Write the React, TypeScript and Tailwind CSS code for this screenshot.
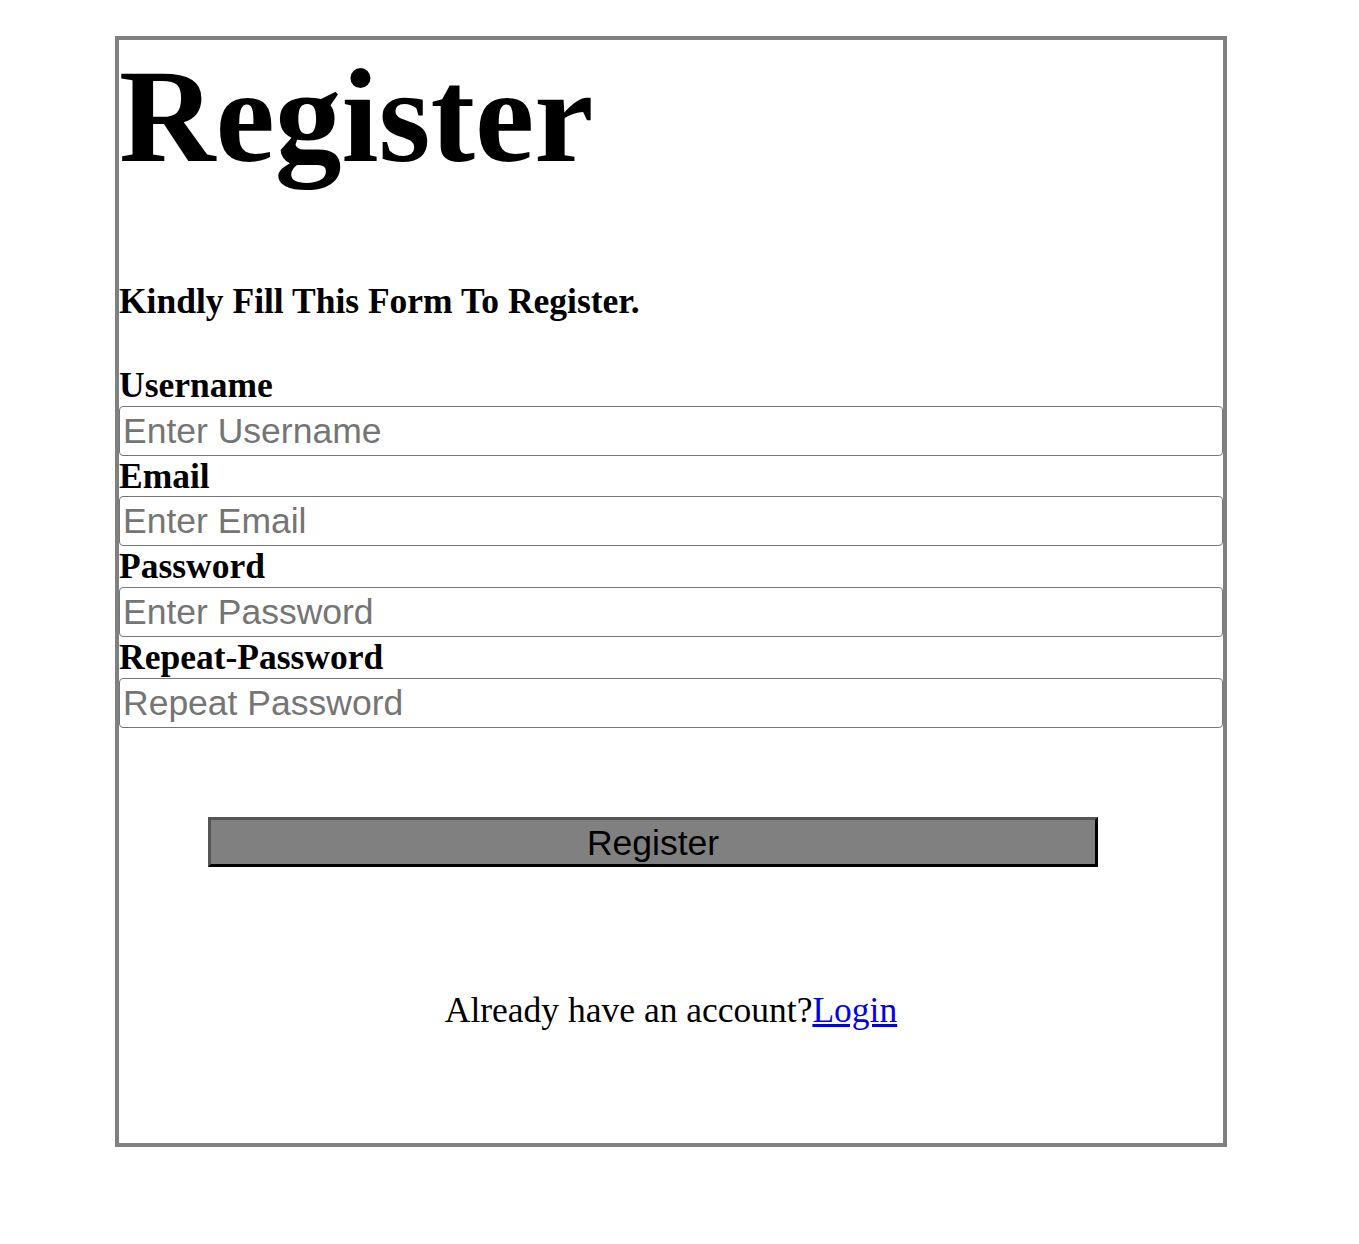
const fields = [
  { label: 'Username', placeholder: 'Enter Username', type: 'text' },
  { label: 'Email', placeholder: 'Enter Email', type: 'email' },
  { label: 'Password', placeholder: 'Enter Password', type: 'password' },
  { label: 'Repeat-Password', placeholder: 'Repeat Password', type: 'password' },
];

export default function App() {
  return (
    <div className="min-h-[1244px] bg-white pt-[36px]">
      <div className="ml-[115px] w-[1112px] h-[1111px] border-4 border-[#808080] font-['Liberation_Serif',serif] text-black">
        <h1 className="text-[133.5px] font-bold leading-[153px]">Register</h1>

        <h3 className="mt-[88px] text-[35.5px] font-bold leading-[41px]">
          Kindly Fill This Form To Register.
        </h3>

        <form className="mt-[43px]" onSubmit={(e) => e.preventDefault()}>
          {fields.map((f) => (
            <div key={f.label}>
              <label className="block text-[35.5px] font-bold leading-[40.67px]">{f.label}</label>
              <input
                type={f.type}
                placeholder={f.placeholder}
                className="block w-full h-[50px] rounded-[4px] border border-[#767676] px-[3px] pt-[1px] font-['Liberation_Sans',sans-serif] text-[35.5px] placeholder:text-[#757575] outline-none"
              />
            </div>
          ))}

          <button
            type="submit"
            className="mt-[89px] ml-[89px] flex items-center justify-center w-[890px] h-[50px] pt-[2px] border-[3px] border-t-[#555555] border-l-[#555555] border-b-black border-r-black bg-[#808080] font-['Liberation_Sans',sans-serif] text-[35.5px] leading-[40px] text-black"
          >
            Register
          </button>
        </form>

        <p className="mt-[123px] text-center text-[35.5px] leading-[41px]">
          Already have an account?
          <a href="#" className="text-[#0000ee] underline">
            Login
          </a>
        </p>
      </div>
    </div>
  );
}
